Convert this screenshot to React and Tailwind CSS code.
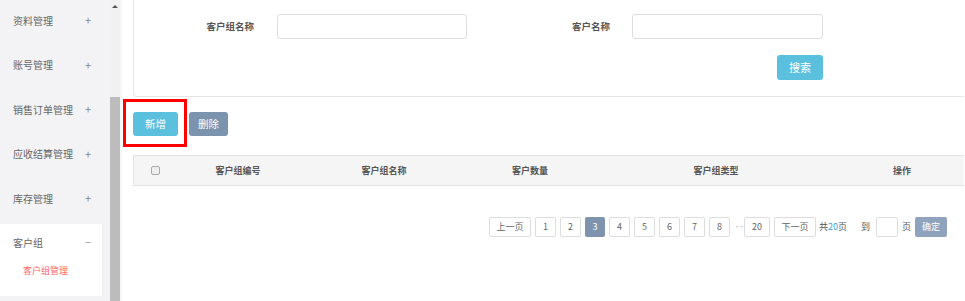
import React from 'react';

const menus = ['资料管理', '账号管理', '销售订单管理', '应收结算管理', '库存管理'];
const columns = ['客户组编号', '客户组名称', '客户数量', '客户组类型', '操作'];
const pages = ['1', '2', '3', '4', '5', '6', '7', '8'];

const Sidebar = () => (
  <div className="w-[110px] h-full bg-[#f3f3f5] shrink-0">
    <div className="-mt-[2px]">
      {menus.map((m) => (
        <div key={m} className="h-[44.5px] w-[102px] flex items-center justify-between pl-[13px] pr-[11px] text-[10px] text-[#666]">
          <span>{m}</span>
          <span className="text-[11px] text-[#888]">+</span>
        </div>
      ))}
    </div>
    {/* active group */}
    <div className="mt-[3px] w-[102px] bg-white pb-[16px]">
      <div className="h-[38px] flex items-center justify-between pl-[13px] pr-[11px] text-[10px] text-[#666]">
        <span>客户组</span>
        <span className="text-[11px] text-[#999]">−</span>
      </div>
      <div className="h-[18px] flex items-center pl-[23px] text-[9px] text-[#f66]">客户组管理</div>
    </div>
  </div>
);

const Scrollbar = () => (
  <div className="flex shrink-0">
    <div className="w-[10px] h-full flex flex-col">
      <div className="h-[97px] bg-[#f1f1f1] flex justify-center pt-[5px]">
        <span className="w-0 h-0 border-l-[3px] border-r-[3px] border-b-[3px] border-l-transparent border-r-transparent border-b-[#555]"></span>
      </div>
      <div className="flex-1 bg-[#bcbcbc]"></div>
    </div>
    <div className="w-[2px] h-full bg-[#f7f7f7]"></div>
  </div>
);

const PageBtn = ({ children, active, className = '' }) => (
  <span
    className={
      active
        ? 'h-[20px] w-[20px] flex items-center justify-center rounded-[2px] bg-[#7d93ae] text-white ' + className
        : 'h-[20px] min-w-[21px] flex items-center justify-center rounded-[2px] border border-[#ddd] bg-white text-[#666] ' + className
    }
  >
    {children}
  </span>
);

export default function App() {
  return (
    <div className="flex h-[301px] w-[965px] overflow-hidden bg-white font-['Noto_Sans_CJK_SC',sans-serif]">
      <Sidebar />
      <Scrollbar />

      <div className="flex-1 pl-[11px] pr-[2px]">
        {/* search panel */}
        <div className="h-[97px] border-l border-b border-[#e6e6e6] rounded-bl-[4px] pt-[14px]">
          <div className="flex items-center h-[25px] text-[9.5px] font-bold text-[#555]">
            <span className="w-[120px] text-right">客户组名称</span>
            <input className="ml-[23px] w-[190px] h-[25px] border border-[#ddd] rounded-[3px] outline-none" />
            <span className="w-[143px] text-right">客户名称</span>
            <input className="ml-[22px] w-[191px] h-[25px] border border-[#ddd] rounded-[3px] outline-none" />
          </div>
          <div className="mt-[16px] w-[689px] flex justify-end">
            <button className="block w-[46px] h-[25px] rounded-[3px] bg-[#5bc0de] text-white text-[11px]">搜索</button>
          </div>
        </div>

        {/* action buttons */}
        <div className="mt-[15px] h-[24px] flex gap-[11px]">
          <div className="relative h-[24px]">
            <button className="block w-[45px] h-[24px] rounded-[3px] bg-[#5bc0de] text-white text-[10.5px]">新增</button>
            <span className="absolute -left-[10px] -top-[13px] w-[64px] h-[48px] border-[3px] border-[#ff0000]"></span>
          </div>
          <button className="block w-[39px] h-[24px] rounded-[3px] bg-[#7b93ad] text-white text-[10.5px]">删除</button>
        </div>

        {/* table header */}
        <div className="mt-[19px] h-[31px] border-t border-b border-l border-[#e3e3e3] bg-[#f5f5f5] grid grid-cols-[42px_124px_168px_124px_248px_124px] items-center text-[9px] font-bold text-[#555]">
          <div className="flex justify-center">
            <span className="w-[9px] h-[9px] rounded-[2px] border border-[#aaa] bg-[#eee]"></span>
          </div>
          {columns.map((c) => (
            <div key={c} className="text-center">{c}</div>
          ))}
        </div>

        {/* pagination */}
        <div className="mt-[31px] pr-[17px] flex justify-end items-center gap-[4px] text-[9px] text-[#666]">
          <PageBtn className="w-[42px]">上一页</PageBtn>
          {pages.map((p) => (
            <PageBtn key={p} active={p === '3'}>{p}</PageBtn>
          ))}
          <span className="w-[6px] text-[6px] leading-none tracking-[-1px] text-[#aaa] text-center">···</span>
          <PageBtn className="w-[26px]">20</PageBtn>
          <PageBtn className="w-[42px]">下一页</PageBtn>
          <span className="ml-[-1px] text-[#555]">共<span className="text-[#3aa0e0]">20</span>页</span>
          <span className="ml-[10px] text-[#555]">到</span>
          <span className="ml-[2px] w-[22px] h-[20px] border border-[#ddd] rounded-[2px]"></span>
          <span className="text-[#555]">页</span>
          <span className="w-[32px] h-[20px] flex items-center justify-center rounded-[2px] bg-[#8fa3bd] text-white">确定</span>
        </div>
      </div>
    </div>
  );
}
